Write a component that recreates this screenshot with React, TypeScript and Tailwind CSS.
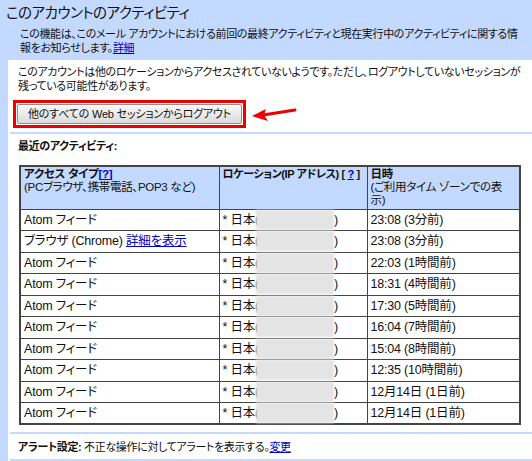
import React from "react";

const rows: { type: React.ReactNode; time: string }[] = [
  { type: "Atom フィード", time: "23:08 (3分前)" },
  {
    type: (
      <>
        ブラウザ (Chrome) <a className="text-[#0000cc] underline">詳細を表示</a>
      </>
    ),
    time: "23:08 (3分前)",
  },
  { type: "Atom フィード", time: "22:03 (1時間前)" },
  { type: "Atom フィード", time: "18:31 (4時間前)" },
  { type: "Atom フィード", time: "17:30 (5時間前)" },
  { type: "Atom フィード", time: "16:04 (7時間前)" },
  { type: "Atom フィード", time: "15:04 (8時間前)" },
  { type: "Atom フィード", time: "12:35 (10時間前)" },
  { type: "Atom フィード", time: "12月14日 (1日前)" },
  { type: "Atom フィード", time: "12月14日 (1日前)" },
];

export default function App() {
  return (
    <div
      className="w-[532px] h-[461px] overflow-hidden bg-[#c3d9ff] text-[#111] text-[11px] leading-[14px] tracking-[-0.35px] [font-feature-settings:'palt'] flex flex-col"
      style={{ fontFamily: '"Liberation Sans", "Noto Sans CJK JP", sans-serif' }}
    >
      <div className="pl-[6px] pt-[4px] h-[22px] text-[14.5px] leading-[18px] tracking-[-0.5px]">
        このアカウントのアクティビティ
      </div>
      <div className="pl-[20px] pr-[8px] pt-[5px] h-[38px]">
        この機能は、このメール アカウントにおける前回の最終アクティビティと現在実行中のアクティビティに関する情報をお知らせします。
        <a className="text-[#0000cc] underline">詳細</a>
      </div>
      <div className="ml-[8px] flex-1 bg-white flex flex-col">
        <div className="pl-[10px] pr-[2px] pt-[5px] h-[40px]">
          このアカウントは他のロケーションからアクセスされていないようです。ただし、ログアウトしていないセッションが残っている可能性があります。
        </div>
        <div className="flex items-center pl-[5px]">
          <div className="border-[3px] border-[#ee0000] p-[1px]">
            <div className="h-[20px] px-[10px] flex items-center border border-[#8f8f8f] rounded-[2px] bg-gradient-to-b from-[#f8f8f8] to-[#dcdcdc] whitespace-nowrap tracking-[-0.2px]">
              他のすべての Web セッションからログアウト
            </div>
          </div>
          <svg width="50" height="20" viewBox="0 0 50 20" className="ml-[3px]">
            <path d="M46 6 L14 11" stroke="#ee0000" strokeWidth="3" strokeLinecap="round" />
            <path d="M3 12 L17 5 L15 11 L19 17 Z" fill="#ee0000" />
          </svg>
        </div>
        <div className="mt-[4px] ml-[2px] h-[2px] bg-[#c3d9ff]" />
        <div className="pl-[10px] pt-[5px] font-bold">最近のアクティビティ:</div>
        <div className="pl-[11px] pt-[12px]">
          <table className="w-[502px] table-fixed border-collapse border-2 border-[#444] text-[12.5px] tracking-[-0.2px]">
            <thead>
              <tr className="bg-[#c3d9ff] align-top h-[43px] text-[11.5px] tracking-[-0.3px]">
                <th className="w-[199px] border border-[#444] px-[3px] pt-[1px] text-left font-normal leading-[13px]">
                  <b>
                    アクセス タイプ<span className="text-[#0000cc]">[<u>?</u>]</span>
                  </b>
                  <br />
                  (PCブラウザ、携帯電話、POP3 など)
                </th>
                <th className="w-[148px] border border-[#444] px-[3px] pt-[1px] text-left font-bold leading-[13px] whitespace-nowrap text-[11px] tracking-[-0.4px] overflow-hidden">
                  ロケーション(IP アドレス) [ <u className="text-[#0000cc]">?</u> ]
                </th>
                <th className="border border-[#444] px-[3px] pt-[1px] text-left font-normal leading-[13px]">
                  <b>日時</b>
                  <br />
                  (ご利用タイム ゾーンでの表
                  <br />
                  示)
                </th>
              </tr>
            </thead>
            <tbody>
              {rows.map((r, i) => (
                <tr key={i} className="h-[21.5px]">
                  <td className="border border-[#444] px-[3px] py-0 leading-[14px]">{r.type}</td>
                  <td className="border border-[#444] px-[3px] py-0 leading-[14px] whitespace-nowrap">
                    <span className="flex items-center">
                      * 日本(
                      <span className="inline-block w-[78px] h-[20px] bg-[#e4e4e4] blur-[1px] -ml-[3px]" />)
                    </span>
                  </td>
                  <td className="border border-[#444] px-[3px] py-0 leading-[14px]">{r.time}</td>
                </tr>
              ))}
            </tbody>
          </table>
        </div>
        <div className="mt-[7px] ml-[2px] h-[2px] bg-[#c3d9ff]" />
        <div className="pl-[10px] pt-[6px] h-[25px]">
          <b>アラート設定:</b> 不正な操作に対してアラートを表示する。
          <a className="text-[#0000cc] underline">変更</a>
        </div>
        <div className="ml-[2px] h-[2px] bg-[#c3d9ff]" />
      </div>
    </div>
  );
}
